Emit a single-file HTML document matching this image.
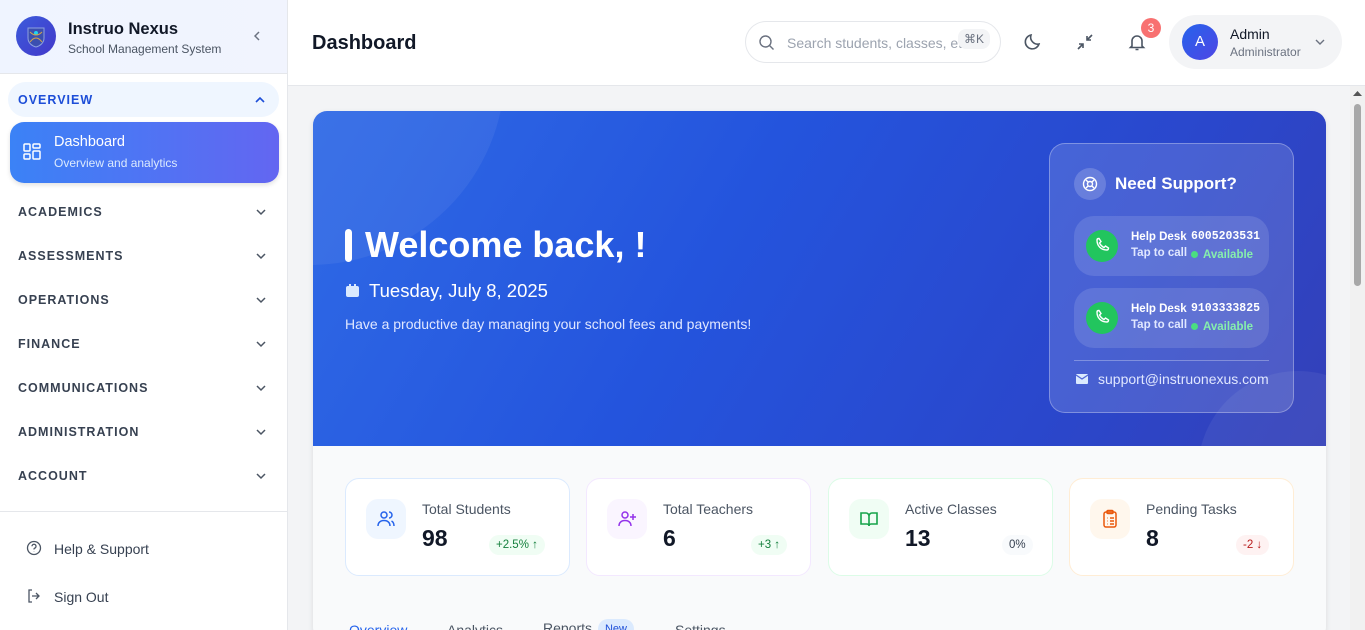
<!DOCTYPE html>
<html style="height:630px;overflow:hidden"><head><meta charset="utf-8"><style>
*{box-sizing:border-box;margin:0;padding:0}
body{width:1365px;height:630px;overflow:hidden;font-family:"Liberation Sans",sans-serif;background:#f3f4f6;position:relative;color:#111827}
.sb{position:absolute;left:0;top:0;width:288px;height:630px;background:#fff;border-right:1px solid #e5e7eb}
.sbh{height:74px;background:linear-gradient(90deg,#eff4ff,#f1f4fe);border-bottom:1px solid #e5e7eb;position:relative}
.logo{position:absolute;left:16px;top:16px;width:40px;height:40px;border-radius:50%;background:linear-gradient(135deg,#3b5bdb,#4338ca)}
.nav{position:absolute;left:18px;font-size:12.5px;font-weight:bold;letter-spacing:1px;color:#374151}
.chev{position:absolute;left:255px;width:12px;height:12px}
.hdr{position:absolute;left:288px;top:0;right:0;height:86px;background:#fff;border-bottom:1px solid #e5e7eb}
.main{position:absolute;left:288px;top:86px;width:1062px;height:544px;background:#f3f4f6;overflow:hidden}
.card{position:absolute;left:25px;top:25px;width:1013px;height:530px;border-radius:14px;overflow:hidden;background:#f9fafb;box-shadow:0 2px 6px rgba(0,0,0,.1)}
.hero{position:absolute;left:0;top:0;width:1013px;height:335px;background:linear-gradient(120deg,#2f6ae6 0%,#2454dd 40%,#2a47cc 75%,#3440b8 100%);overflow:hidden}
.stat{position:absolute;top:367px;width:225px;height:98px;background:#fff;border-radius:14px;border:1px solid}
.stat .ic{position:absolute;left:20px;top:20px;width:40px;height:40px;border-radius:12px}
.stat .t{position:absolute;left:76px;top:22px;font-size:14px;color:#4b5563}
.stat .v{position:absolute;left:76px;top:46px;font-size:23px;font-weight:bold;color:#111827}
.stat .b{position:absolute;top:56px;height:20px;border-radius:10px;font-size:11.5px;padding:4px 7px}
.sup{position:absolute;left:736px;top:32px;width:245px;height:270px;border-radius:16px;background:rgba(255,255,255,.14);border:1px solid rgba(255,255,255,.3)}
.hd{position:absolute;left:24px;width:195px;height:60px;border-radius:20px;background:rgba(255,255,255,.12)}
.hd .ph{position:absolute;left:12px;top:14px;width:32px;height:32px;border-radius:50%;background:#22c55e}
.hd .l1{position:absolute;left:57px;top:15px;color:#fff;font-size:11.5px;font-weight:bold}
.hd .l2{position:absolute;left:57px;top:31px;color:#e0e7ff;font-size:11.5px;font-weight:bold}
.hd .num{position:absolute;left:117px;top:14px;color:#fff;font-family:"Liberation Mono",monospace;font-size:11.5px;font-weight:bold}
.hd .av{position:absolute;left:117px;top:33px;color:#86efac;font-size:11.5px;font-weight:bold}
.hd .av:before{content:"";display:inline-block;width:7px;height:7px;border-radius:50%;background:#4ade80;margin-right:5px}
</style></head><body>
<div class="sb">
 <div class="sbh">
  <div class="logo"><svg width="40" height="40" viewBox="0 0 40 40"><path d="M12 12h16v10c0 5-4 8-8 9-4-1-8-4-8-9z" fill="#3b4fb0" stroke="#8da0e0" stroke-width="1"/><circle cx="20" cy="17" r="2" fill="#22d3ee"/><path d="M14 16q6 6 12 0M14 26q6-8 12 0" stroke="#d4a34a" fill="none" stroke-width="1"/></svg></div>
  <div style="position:absolute;left:68px;top:20px;font-size:16.5px;font-weight:bold;color:#111827">Instruo Nexus</div>
  <div style="position:absolute;left:68px;top:42px;font-size:12px;color:#4b5563">School Management System</div>
  <svg style="position:absolute;left:251px;top:30px" width="12" height="12" viewBox="0 0 12 12"><path d="M8 2L4 6l4 4" stroke="#6b7280" stroke-width="1.5" fill="none"/></svg>
 </div>
 <div style="position:absolute;left:8px;top:82px;width:271px;height:35px;border-radius:18px;background:#eff6ff"></div>
 <div class="nav" style="top:93px;color:#1d4ed8">OVERVIEW</div>
 <svg class="chev" style="top:94px;left:254px" viewBox="0 0 12 12"><path d="M2 8l4-4 4 4" stroke="#1d4ed8" stroke-width="1.6" fill="none"/></svg>
 <div style="position:absolute;left:10px;top:122px;width:269px;height:61px;border-radius:14px;background:linear-gradient(90deg,#3b82f6,#6366f1);box-shadow:0 2px 5px rgba(0,0,0,.12)">
  <svg style="position:absolute;left:13px;top:21px" width="18" height="18" viewBox="0 0 18 18" fill="none" stroke="#fff" stroke-width="1.5"><rect x="1" y="1" width="6" height="7" rx="1"/><rect x="10" y="1" width="7" height="4" rx="1"/><rect x="1" y="11" width="6" height="5" rx="1"/><rect x="10" y="8" width="7" height="8" rx="1"/></svg>
  <div style="position:absolute;left:44px;top:12px;color:#fff;font-size:14.5px">Dashboard</div>
  <div style="position:absolute;left:44px;top:34px;color:#dbeafe;font-size:12px">Overview and analytics</div>
 </div>
 <div class="nav" style="top:205px">ACADEMICS</div>
 <div class="nav" style="top:249px">ASSESSMENTS</div>
 <div class="nav" style="top:293px">OPERATIONS</div>
 <div class="nav" style="top:337px">FINANCE</div>
 <div class="nav" style="top:381px">COMMUNICATIONS</div>
 <div class="nav" style="top:425px">ADMINISTRATION</div>
 <div class="nav" style="top:469px">ACCOUNT</div>
 <svg class="chev" style="top:206px" viewBox="0 0 12 12"><path d="M2 4l4 4 4-4" stroke="#4b5563" stroke-width="1.5" fill="none"/></svg>
 <svg class="chev" style="top:250px" viewBox="0 0 12 12"><path d="M2 4l4 4 4-4" stroke="#4b5563" stroke-width="1.5" fill="none"/></svg>
 <svg class="chev" style="top:294px" viewBox="0 0 12 12"><path d="M2 4l4 4 4-4" stroke="#4b5563" stroke-width="1.5" fill="none"/></svg>
 <svg class="chev" style="top:338px" viewBox="0 0 12 12"><path d="M2 4l4 4 4-4" stroke="#4b5563" stroke-width="1.5" fill="none"/></svg>
 <svg class="chev" style="top:382px" viewBox="0 0 12 12"><path d="M2 4l4 4 4-4" stroke="#4b5563" stroke-width="1.5" fill="none"/></svg>
 <svg class="chev" style="top:426px" viewBox="0 0 12 12"><path d="M2 4l4 4 4-4" stroke="#4b5563" stroke-width="1.5" fill="none"/></svg>
 <svg class="chev" style="top:470px" viewBox="0 0 12 12"><path d="M2 4l4 4 4-4" stroke="#4b5563" stroke-width="1.5" fill="none"/></svg>
 <div style="position:absolute;left:0;top:511px;width:287px;border-top:1px solid #e5e7eb"></div>
 <svg style="position:absolute;left:26px;top:540px" width="16" height="16" viewBox="0 0 16 16" fill="none" stroke="#4b5563" stroke-width="1.3"><circle cx="8" cy="8" r="6.5"/><path d="M6 6.3a2 2 0 1 1 2.5 1.9c-.5.2-.5.6-.5 1.3M8 11.5v.3"/></svg>
 <div style="position:absolute;left:54px;top:541px;font-size:14px;color:#374151">Help &amp; Support</div>
 <svg style="position:absolute;left:26px;top:588px" width="16" height="16" viewBox="0 0 16 16" fill="none" stroke="#4b5563" stroke-width="1.3"><path d="M6 2H3v12h3M10 5l3 3-3 3M13 8H6"/></svg>
 <div style="position:absolute;left:54px;top:589px;font-size:14px;color:#374151">Sign Out</div>
</div>
<div class="hdr">
 <div style="position:absolute;left:24px;top:32px;font-size:20px;font-weight:bold;color:#111827">Dashboard</div>
 <div style="position:absolute;left:457px;top:21px;width:256px;height:42px;border:1px solid #e5e7eb;border-radius:21px;overflow:hidden">
  <svg style="position:absolute;left:12px;top:12px" width="17" height="17" viewBox="0 0 17 17" fill="none" stroke="#6b7280" stroke-width="1.4"><circle cx="7.5" cy="7.5" r="5.5"/><path d="M11.5 11.5l4 4"/></svg>
  <div style="position:absolute;left:41px;top:13px;font-size:14px;color:#9ca3af;white-space:nowrap">Search students, classes, etc.</div>
  <div style="position:absolute;left:212px;top:7px;width:32px;height:20px;background:#f3f4f6;border-radius:8px;font-size:12px;color:#6b7280;text-align:center;line-height:20px">⌘K</div>
 </div>
 <svg style="position:absolute;left:735px;top:32px" width="20" height="20" viewBox="0 0 20 20" fill="none" stroke="#4b5563" stroke-width="1.6"><path d="M16 12A7 7 0 0 1 8 3a7 7 0 1 0 8 9z"/></svg>
 <svg style="position:absolute;left:787px;top:32px" width="20" height="20" viewBox="0 0 20 20" fill="none" stroke="#4b5563" stroke-width="1.6"><path d="M12 8l5-5M12 4v4h4M8 12l-5 5M4 12h4v4"/></svg>
 <svg style="position:absolute;left:839px;top:32px" width="20" height="20" viewBox="0 0 20 20" fill="none" stroke="#4b5563" stroke-width="1.6"><path d="M5 14V9a5 5 0 0 1 10 0v5l1.5 1.5h-13zM8.5 17.5h3"/></svg>
 <div style="position:absolute;left:853px;top:18px;width:20px;height:20px;border-radius:50%;background:#f87171;color:#fff;font-size:12px;text-align:center;line-height:20px">3</div>
 <div style="position:absolute;left:881px;top:15px;width:173px;height:54px;border-radius:27px;background:#f3f4f6">
  <div style="position:absolute;left:13px;top:9px;width:36px;height:36px;border-radius:50%;background:linear-gradient(135deg,#2563eb,#4f46e5);color:#fff;font-size:15px;text-align:center;line-height:36px">A</div>
  <div style="position:absolute;left:61px;top:11px;font-size:14px;color:#111827">Admin</div>
  <div style="position:absolute;left:61px;top:30px;font-size:12px;color:#6b7280">Administrator</div>
  <svg style="position:absolute;left:145px;top:21px" width="12" height="12" viewBox="0 0 12 12"><path d="M2 4l4 4 4-4" stroke="#6b7280" stroke-width="1.4" fill="none"/></svg>
 </div>
</div>
<div class="main">
<div class="card">
 <div class="hero">
  <div style="position:absolute;left:-198px;top:-236px;width:390px;height:390px;border-radius:50%;background:rgba(255,255,255,.06)"></div>
  <div style="position:absolute;left:885px;top:260px;width:200px;height:200px;border-radius:50%;background:rgba(255,255,255,.06)"></div>
  <div style="position:absolute;left:32px;top:118px;width:7px;height:33px;border-radius:4px;background:#fff"></div>
  <div style="position:absolute;left:52px;top:113px;font-size:36px;font-weight:bold;color:#fff">Welcome back, !</div>
  <svg style="position:absolute;left:33px;top:173px" width="13" height="13" viewBox="0 0 13 13"><rect x="0" y="2" width="13" height="11" rx="2" fill="#dbeafe"/><rect x="3" y="0" width="2" height="3" fill="#dbeafe"/><rect x="8" y="0" width="2" height="3" fill="#dbeafe"/></svg>
  <div style="position:absolute;left:56px;top:169px;font-size:18.5px;color:#fff">Tuesday, July 8, 2025</div>
  <div style="position:absolute;left:32px;top:205px;font-size:14px;color:#e0e7ff">Have a productive day managing your school fees and payments!</div>
  <div class="sup">
   <div style="position:absolute;left:24px;top:24px;width:32px;height:32px;border-radius:50%;background:rgba(255,255,255,.18)"><svg style="position:absolute;left:8px;top:8px" width="16" height="16" viewBox="0 0 16 16" fill="none" stroke="#fff" stroke-width="1.4"><circle cx="8" cy="8" r="6.5"/><circle cx="8" cy="8" r="2.5"/><path d="M4 4l2.3 2.3M12 4L9.7 6.3M4 12l2.3-2.3M12 12L9.7 9.7"/></svg></div>
   <div style="position:absolute;left:65px;top:30px;font-size:17px;font-weight:bold;color:#fff">Need Support?</div>
   <div class="hd" style="top:72px"><div class="ph"><svg width="32" height="32" viewBox="0 0 32 32" fill="none" stroke="#fff" stroke-width="1.4"><path d="M11 10c0-1 1-1.5 2-1.5l2 3-1.5 1.5c1 2 2.5 3.5 4.5 4.5l1.5-1.5 3 2c0 1-.5 2-1.5 2C15 20 11 16 11 10z"/></svg></div><div class="l1">Help Desk</div><div class="l2">Tap to call</div><div class="num">6005203531</div><div class="av">Available</div></div>
   <div class="hd" style="top:144px"><div class="ph"><svg width="32" height="32" viewBox="0 0 32 32" fill="none" stroke="#fff" stroke-width="1.4"><path d="M11 10c0-1 1-1.5 2-1.5l2 3-1.5 1.5c1 2 2.5 3.5 4.5 4.5l1.5-1.5 3 2c0 1-.5 2-1.5 2C15 20 11 16 11 10z"/></svg></div><div class="l1">Help Desk</div><div class="l2">Tap to call</div><div class="num">9103333825</div><div class="av">Available</div></div>
   <div style="position:absolute;left:24px;top:216px;width:195px;border-top:1px solid rgba(255,255,255,.3)"></div>
   <svg style="position:absolute;left:26px;top:230px" width="12" height="10" viewBox="0 0 12 10"><rect width="12" height="10" rx="1" fill="#dbeafe"/><path d="M0 1l6 4 6-4" stroke="#5068d8" stroke-width="1.3" fill="none"/></svg>
   <div style="position:absolute;left:48px;top:227px;font-size:14px;color:#e0e7ff">support@instruonexus.com</div>
  </div>
 </div>
 <div class="stat" style="left:32px;border-color:#dbeafe"><div class="ic" style="background:#eff6ff"><svg style="margin:10px" width="20" height="20" viewBox="0 0 20 20" fill="none" stroke="#2563eb" stroke-width="1.5"><circle cx="8" cy="6" r="3"/><path d="M2 17c0-3.5 2.5-5.5 6-5.5s6 2 6 5.5M13 3a3 3 0 0 1 0 6M15.5 12c1.5.8 2.5 2.5 2.5 5"/></svg></div><div class="t">Total Students</div><div class="v">98</div><div class="b" style="left:143px;background:#f0fdf4;color:#15803d">+2.5% ↑</div></div>
 <div class="stat" style="left:273px;border-color:#f3e8ff"><div class="ic" style="background:#faf5ff"><svg style="margin:10px" width="20" height="20" viewBox="0 0 20 20" fill="none" stroke="#9333ea" stroke-width="1.5"><circle cx="8" cy="6" r="3"/><path d="M2 17c0-3.5 2.5-5.5 6-5.5s6 2 6 5.5M16 5v6M13 8h6"/></svg></div><div class="t">Total Teachers</div><div class="v">6</div><div class="b" style="left:164px;background:#f0fdf4;color:#15803d">+3 ↑</div></div>
 <div class="stat" style="left:515px;border-color:#dcfce7"><div class="ic" style="background:#f0fdf4"><svg style="margin:10px" width="20" height="20" viewBox="0 0 20 20" fill="none" stroke="#16a34a" stroke-width="1.6"><path d="M2 4h5a3 3 0 0 1 3 3v10a2 2 0 0 0-2-2H2zM18 4h-5a3 3 0 0 0-3 3v10a2 2 0 0 1 2-2h6z"/></svg></div><div class="t">Active Classes</div><div class="v">13</div><div class="b" style="left:173px;background:#f8fafc;color:#374151">0%</div></div>
 <div class="stat" style="left:756px;border-color:#ffedd5"><div class="ic" style="background:#fff7ed"><svg style="margin:10px" width="20" height="20" viewBox="0 0 20 20" fill="none" stroke="#ea580c" stroke-width="1.5"><rect x="4" y="3" width="12" height="15" rx="2"/><rect x="7" y="1.5" width="6" height="3" rx="1"/><path d="M7 9h.5M7 12h.5M7 15h.5M10 9h4M10 12h4M10 15h4"/></svg></div><div class="t">Pending Tasks</div><div class="v">8</div><div class="b" style="left:166px;background:#fef2f2;color:#b91c1c">-2 ↓</div></div>
 <div style="position:absolute;left:36px;top:511px;font-size:14px;color:#2563eb">Overview</div>
 <div style="position:absolute;left:134px;top:511px;font-size:14px;color:#4b5563">Analytics</div>
 <div style="position:absolute;left:230px;top:509px;font-size:14px;color:#4b5563">Reports</div>
 <div style="position:absolute;left:285px;top:508px;width:36px;height:20px;border-radius:10px;background:#dbeafe;color:#1d4ed8;font-size:11px;text-align:center;line-height:20px">New</div>
 <div style="position:absolute;left:362px;top:511px;font-size:14px;color:#4b5563">Settings</div>
</div>
</div>
<div style="position:absolute;left:1350px;top:86px;width:15px;height:544px;background:#f1f1f1"><div style="position:absolute;left:4px;top:18px;width:7px;height:182px;border-radius:4px;background:#a8a8a8"></div><svg style="position:absolute;left:3px;top:4px" width="9" height="6"><path d="M0 6L4.5 1 9 6z" fill="#555"/></svg></div>
</body></html>
